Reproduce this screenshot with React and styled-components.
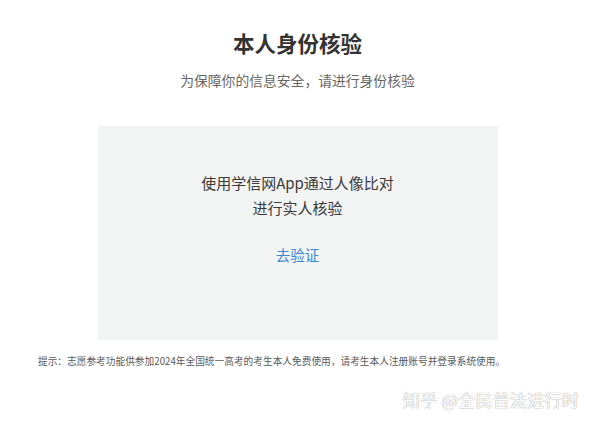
import React from "react";
import styled, { createGlobalStyle } from "styled-components";

const Global = createGlobalStyle`
  html, body { margin: 0; padding: 0; background: #fff; }
  body { font-family: "Noto Sans CJK SC", "Noto Sans", sans-serif; }
`;

const Page = styled.div`
  position: relative;
  width: 595px;
  height: 425px;
  padding-top: 28px;
  box-sizing: border-box;
  display: flex;
  flex-direction: column;
  align-items: center;
`;

const Title = styled.h1`
  margin: 0;
  font-size: 21.5px;
  line-height: 30px;
  font-weight: 700;
  color: #333;
`;

const Subtitle = styled.p`
  margin: 12px 0 0;
  font-size: 13.8px;
  line-height: 20px;
  color: #666;
`;

const Card = styled.div`
  margin-top: 36px;
  width: 400px;
  height: 214px;
  box-sizing: border-box;
  background: #f2f3f3;
  padding-top: 44px;
  display: flex;
  flex-direction: column;
  align-items: center;
`;

const CardText = styled.p`
  margin: 0;
  font-size: 15px;
  line-height: 25px;
  color: #3a3a3a;
  text-align: center;
`;

const Link = styled.a`
  margin-top: 22px;
  font-size: 14.5px;
  line-height: 25px;
  color: #3d87d3;
  text-decoration: none;
  cursor: pointer;
`;

const Note = styled.p`
  align-self: flex-start;
  margin: 14px 0 0 38px;
  font-size: 9.7px;
  line-height: 14px;
  color: #5a5a5a;
  white-space: nowrap;
`;

const Watermark = styled.div`
  position: absolute;
  left: 403px;
  top: 388px;
  font-size: 17px;
  line-height: 24px;
  color: #fff;
  white-space: nowrap;
  text-shadow: 0 0 1px #a8a8a8, 0 0 1px #a8a8a8;
  letter-spacing: 0.3px;
`;

export default function App() {
  return (
    <>
      <Global />
      <Page>
        <Title>本人身份核验</Title>
        <Subtitle>为保障你的信息安全，请进行身份核验</Subtitle>
        <Card>
          <CardText>
            使用学信网App通过人像比对
            <br />
            进行实人核验
          </CardText>
          <Link>去验证</Link>
        </Card>
        <Note>
          提示：志愿参考功能供参加2024年全国统一高考的考生本人免费使用，请考生本人注册账号并登录系统使用。
        </Note>
        <Watermark>知乎 @全民普法进行时</Watermark>
      </Page>
    </>
  );
}
